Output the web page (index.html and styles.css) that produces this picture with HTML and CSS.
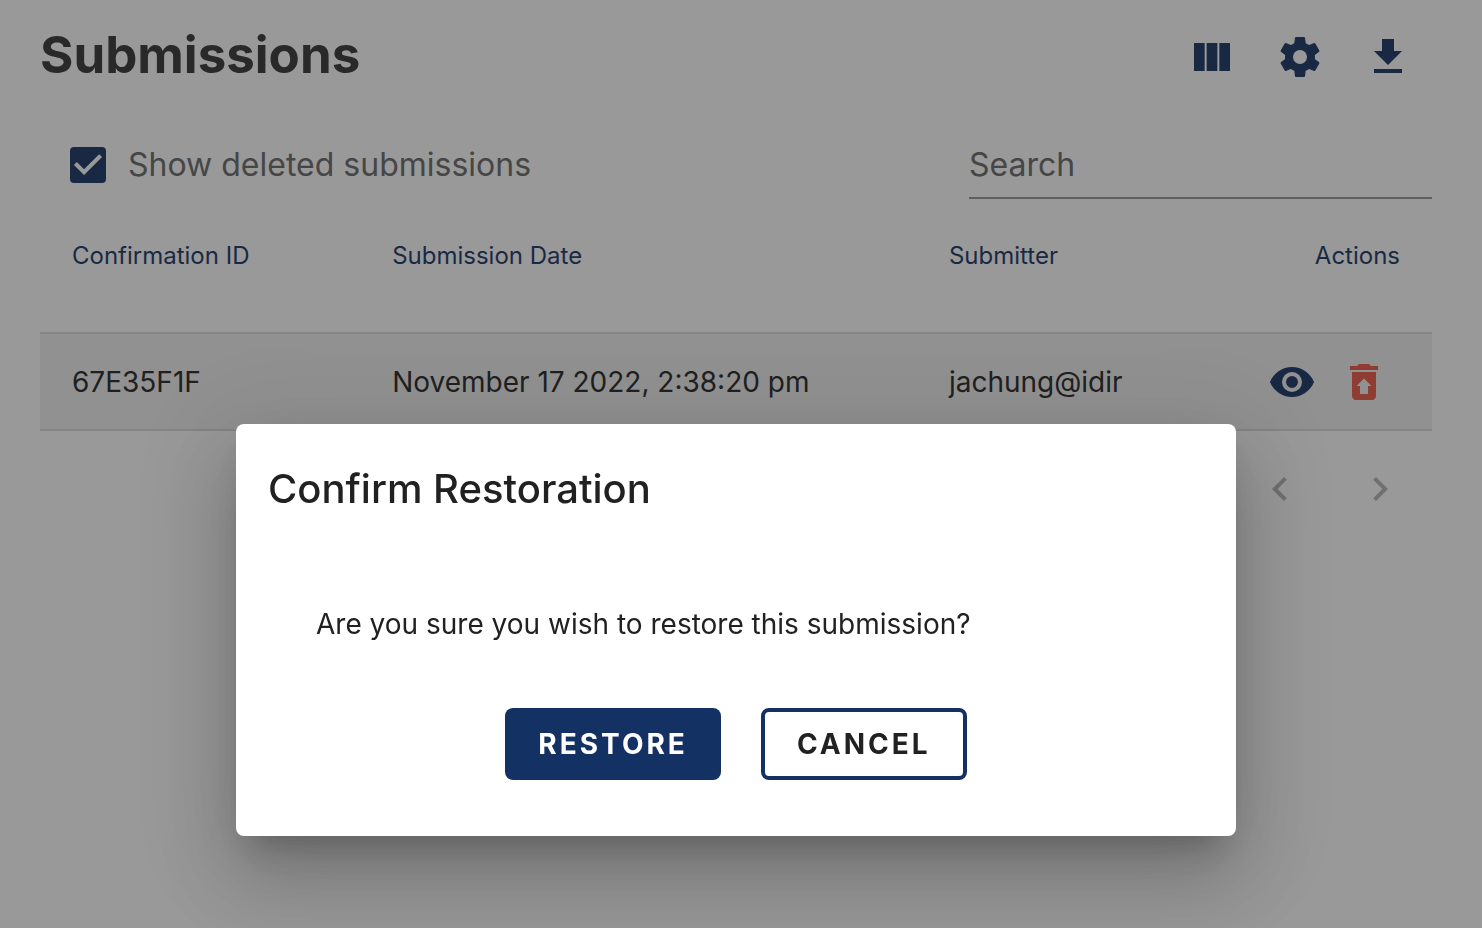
FILE: index.html
```html
<!DOCTYPE html>
<html lang="en">
<head>
<meta charset="utf-8">
<meta name="viewport" content="width=device-width, initial-scale=1">
<title>Submissions</title>
<link rel="stylesheet" href="styles.css">
</head>
<body>
<main class="page">
  <header class="page-header">
    <h1 class="page-title">Submissions</h1>
    <div class="toolbar">
      <button class="icon-button" type="button" aria-label="Choose columns">
        <svg class="icon" viewBox="0 0 24 24"><path d="M14.67 5v14H9.33V5h5.34zm1 14H21V5h-5.33v14zm-7.34 0V5H3v14h5.33z"/></svg>
      </button>
      <button class="icon-button" type="button" aria-label="Settings">
        <svg class="icon" viewBox="0 0 24 24"><path d="M12,15.5A3.5,3.5 0 0,1 8.5,12A3.5,3.5 0 0,1 12,8.5A3.5,3.5 0 0,1 15.5,12A3.5,3.5 0 0,1 12,15.5M19.43,12.97C19.47,12.65 19.5,12.33 19.5,12C19.5,11.67 19.47,11.34 19.43,11L21.54,9.37C21.73,9.22 21.78,8.95 21.66,8.73L19.66,5.27C19.54,5.05 19.27,4.96 19.05,5.05L16.56,6.05C16.04,5.66 15.5,5.32 14.87,5.07L14.5,2.42C14.46,2.18 14.25,2 14,2H10C9.75,2 9.54,2.18 9.5,2.42L9.13,5.07C8.5,5.32 7.96,5.66 7.44,6.05L4.95,5.05C4.73,4.96 4.46,5.05 4.34,5.27L2.34,8.73C2.21,8.95 2.27,9.22 2.46,9.37L4.57,11C4.53,11.34 4.5,11.67 4.5,12C4.5,12.33 4.53,12.65 4.57,12.97L2.46,14.63C2.27,14.78 2.21,15.05 2.34,15.27L4.34,18.73C4.46,18.95 4.73,19.03 4.95,18.95L7.44,17.94C7.96,18.34 8.5,18.68 9.13,18.93L9.5,21.58C9.54,21.82 9.75,22 10,22H14C14.25,22 14.46,21.82 14.5,21.58L14.87,18.93C15.5,18.67 16.04,18.34 16.56,17.94L19.05,18.95C19.27,19.03 19.54,18.95 19.66,18.73L21.66,15.27C21.78,15.05 21.73,14.78 21.54,14.63L19.43,12.97Z"/></svg>
      </button>
      <button class="icon-button" type="button" aria-label="Export submissions">
        <svg class="icon" viewBox="0 0 24 24"><path d="M5 20h14v-2H5v2zM19 9h-4V3H9v6H5l7 7 7-7z"/></svg>
      </button>
    </div>
  </header>

  <div class="filters">
    <div class="toggle">
      <input class="checkbox" type="checkbox" id="show-deleted" checked>
      <label class="toggle-label" for="show-deleted">Show deleted submissions</label>
    </div>
    <input class="search" type="search" placeholder="Search" aria-label="Search">
  </div>

  <table class="table">
    <thead>
      <tr>
        <th class="col-id" scope="col">Confirmation ID</th>
        <th class="col-date" scope="col">Submission Date</th>
        <th scope="col">Submitter</th>
        <th class="col-actions" scope="col">Actions</th>
      </tr>
    </thead>
    <tbody>
      <tr>
        <td>67E35F1F</td>
        <td>November 17 2022, 2:38:20 pm</td>
        <td>jachung@idir</td>
        <td class="col-actions">
          <div class="row-actions">
            <button class="icon-button" type="button" aria-label="View submission">
              <svg class="icon" viewBox="0 0 24 24"><path d="M12,9A3,3 0 0,0 9,12A3,3 0 0,0 12,15A3,3 0 0,0 15,12A3,3 0 0,0 12,9M12,17A5,5 0 0,1 7,12A5,5 0 0,1 12,7A5,5 0 0,1 17,12A5,5 0 0,1 12,17M12,4.5C7,4.5 2.73,7.61 1,12C2.73,16.39 7,19.5 12,19.5C17,19.5 21.27,16.39 23,12C21.27,7.61 17,4.5 12,4.5Z"/></svg>
            </button>
            <button class="icon-button icon-button-danger" type="button" aria-label="Restore submission">
              <svg class="icon" viewBox="0 0 24 24"><path d="M14,14H15.7L12,10.2L8.3,14H10V18H14V14M6,7H18V19C18,20.1 17.1,21 16,21H8C6.9,21 6,20.1 6,19V7M19,4V6H5V4H8.5L9.5,3H14.5L15.5,4H19Z"/></svg>
            </button>
          </div>
        </td>
      </tr>
    </tbody>
  </table>

  <nav class="pagination" aria-label="Pages">
    <button class="icon-button icon-button-muted" type="button" aria-label="Previous page">
      <svg class="icon" viewBox="0 0 24 24"><path d="M15.41,16.58L10.83,12L15.41,7.41L14,6L8,12L14,18L15.41,16.58Z"/></svg>
    </button>
    <button class="icon-button icon-button-muted" type="button" aria-label="Next page">
      <svg class="icon" viewBox="0 0 24 24"><path d="M8.59,16.58L13.17,12L8.59,7.41L10,6L16,12L10,18L8.59,16.58Z"/></svg>
    </button>
  </nav>
</main>

<div class="overlay">
  <section class="dialog" role="dialog" aria-modal="true" aria-labelledby="dialog-title">
    <h2 class="dialog-title" id="dialog-title">Confirm Restoration</h2>
    <p class="dialog-text">Are you sure you wish to restore this submission?</p>
    <div class="dialog-actions">
      <button class="button button-primary" type="button">RESTORE</button>
      <button class="button button-outlined" type="button">CANCEL</button>
    </div>
  </section>
</div>
</body>
</html>
```
FILE: styles.css
```css
:root {
  --navy: #133162;
  --ink: #212121;
  --muted: #666;
  --gutter: 10px;
}

* {
  box-sizing: border-box;
}

body {
  margin: 0;
  background: #fff;
  color: var(--ink);
  font-family: Inter, "Liberation Sans", sans-serif;
  font-size: 28px;
  line-height: 40px;
}

button,
input {
  font: inherit;
}

.page {
  margin-right: var(--gutter);
  padding: 21px 40px;
}

.page-header {
  display: flex;
  align-items: flex-start;
  justify-content: space-between;
  padding-right: 8px;
}

.page-title {
  margin: 0;
  color: #313132;
  font-size: 51px;
  font-weight: 700;
  line-height: 68px;
}

.toolbar {
  display: flex;
  gap: 16px;
}

.icon-button {
  display: flex;
  align-items: center;
  justify-content: center;
  width: 72px;
  height: 72px;
  padding: 0;
  border: 0;
  background: none;
  color: var(--navy);
}

.icon-button-danger {
  color: #ed5343;
}

.icon-button-muted {
  color: #b3b3b3;
}

.icon {
  width: 48px;
  height: 48px;
  fill: currentColor;
}

.filters {
  display: flex;
  align-items: center;
  justify-content: space-between;
  margin-top: 38px;
  padding-left: 30px;
}

.toggle {
  display: flex;
  align-items: center;
  gap: 22px;
}

.checkbox {
  display: grid;
  appearance: none;
  width: 36px;
  height: 36px;
  margin: 0;
  border-radius: 4px;
  background: var(--navy);
}

.checkbox:checked::after {
  content: "";
  background: #fff;
  clip-path: polygon(39% 78%, 11% 50%, 19% 42%, 39% 62%, 81% 20%, 89% 28%);
}

.toggle-label {
  color: var(--muted);
  font-size: 32px;
}

.search {
  width: 34%;
  height: 68px;
  padding: 0;
  border: 0;
  border-bottom: 2px solid #949494;
  border-radius: 0;
  background: none;
  color: var(--ink);
  font-size: 32px;
}

.search::placeholder {
  color: var(--muted);
  opacity: 1;
}

.table {
  width: 100%;
  border-collapse: collapse;
  text-align: left;
}

.table th {
  height: 134px;
  padding: 37px 32px;
  color: var(--navy);
  font-size: 24px;
  font-weight: 400;
  vertical-align: top;
}

.table td {
  padding: 12px 32px 11px;
  border-top: 2px solid #dadada;
  border-bottom: 2px solid #dadada;
  background: #f1f1f1;
}

.table .col-id {
  width: 23%;
}

.table .col-date {
  width: 40%;
}

.table .col-actions {
  text-align: right;
}

.row-actions {
  display: flex;
  justify-content: flex-end;
}

.pagination {
  display: flex;
  justify-content: flex-end;
  gap: 28px;
  padding: 22px 16px;
}

.overlay {
  position: fixed;
  inset: 0;
  display: flex;
  align-items: flex-end;
  justify-content: center;
  padding: 0 var(--gutter) 92px 0;
  background: rgba(33, 33, 33, 0.46);
}

.dialog {
  width: 1000px;
  max-width: 90%;
  padding: 33px 32px 56px;
  border-radius: 8px;
  background: #fff;
  box-shadow:
    0 22px 30px -14px rgba(0, 0, 0, 0.2),
    0 48px 76px 6px rgba(0, 0, 0, 0.14),
    0 18px 92px 16px rgba(0, 0, 0, 0.12);
}

.dialog-title {
  margin: 0;
  font-size: 40px;
  font-weight: 500;
  line-height: 64px;
}

.dialog-text {
  margin: 0;
  padding: 83px 48px 64px;
}

.dialog-actions {
  display: flex;
  justify-content: center;
  gap: 40px;
}

.button {
  height: 72px;
  padding: 0 32px;
  border: 4px solid var(--navy);
  border-radius: 8px;
  font-weight: 700;
  letter-spacing: 3px;
}

.button-primary {
  padding: 0 33px;
  border: 0;
  background: var(--navy);
  color: #fff;
}

.button-outlined {
  background: #fff;
  color: var(--ink);
}
```
